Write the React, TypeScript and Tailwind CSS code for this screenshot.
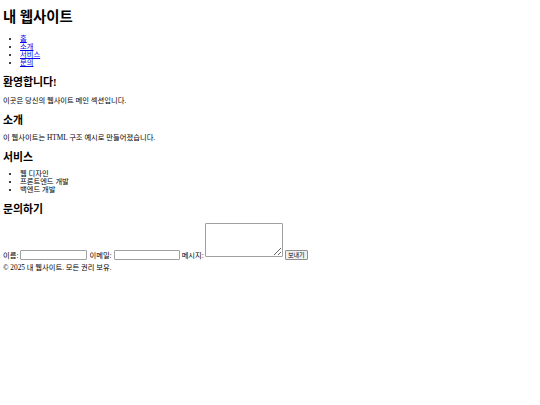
import React from 'react';

const navLinks = ['홈', '소개', '서비스', '문의'];
const services = ['웹 디자인', '프론트엔드 개발', '백엔드 개발'];

const App: React.FC = () => {
  return (
    <div className="min-h-[405px] bg-white px-[3px] text-black font-['Liberation_Serif','Noto_Sans_CJK_KR',serif] text-[7.3px] leading-[8px]">
      {/* 헤더 */}
      <header>
        <h1 className="mt-0 pt-[9px] text-[14.4px] font-bold leading-[16px]">내 웹사이트</h1>
        <nav>
          <ul className="mt-[9.5px] list-disc pl-[17px]">
            {navLinks.map((link) => (
              <li key={link} className="leading-[8px]">
                <a href="#" className="text-[#0000ee] underline">
                  {link}
                </a>
              </li>
            ))}
          </ul>
        </nav>
      </header>

      <main>
        <section>
          <h2 className="mt-[9px] text-[10.9px] font-bold leading-[12px]">환영합니다!</h2>
          <p className="mt-[9px]">이곳은 당신의 웹사이트 메인 섹션입니다.</p>
        </section>

        <section>
          <h2 className="mt-[9px] text-[10.9px] font-bold leading-[12px]">소개</h2>
          <p className="mt-[8px]">이 웹사이트는 HTML 구조 예시로 만들어졌습니다.</p>
        </section>

        <section>
          <h2 className="mt-[9px] text-[10.9px] font-bold leading-[12px]">서비스</h2>
          <ul className="mt-[7px] list-disc pl-[17px]">
            {services.map((s) => (
              <li key={s} className="leading-[8px]">{s}</li>
            ))}
          </ul>
        </section>

        <section>
          <h2 className="mt-[9.5px] text-[10.9px] font-bold leading-[12px]">문의하기</h2>
          <form className="mt-[8px] flex items-end gap-[2px]" onSubmit={(e) => e.preventDefault()}>
            <label htmlFor="name">이름:</label>
            <input
              id="name"
              type="text"
              className="h-[10px] w-[67px] rounded-[1px] border border-[#a0a0a0] bg-white"
            />
            <label htmlFor="email">이메일:</label>
            <input
              id="email"
              type="email"
              className="h-[10px] w-[66px] rounded-[1px] border border-[#a0a0a0] bg-white"
            />
            <label htmlFor="message">메시지:</label>
            <textarea
              id="message"
              className="mb-[3px] -ml-[1px] h-[34px] w-[78px] rounded-[1px] border border-[#a0a0a0] bg-white"
            />
            <button
              type="submit"
              className="h-[10px] w-[23px] rounded-[1px] border border-[#8f8f8f] bg-[#efefef] text-[6px] leading-[8px]"
            >
              보내기
            </button>
          </form>
        </section>
      </main>

      <footer>
        <p className="mt-[4px]">© 2025 내 웹사이트. 모든 권리 보유.</p>
      </footer>
    </div>
  );
};

export default App;
